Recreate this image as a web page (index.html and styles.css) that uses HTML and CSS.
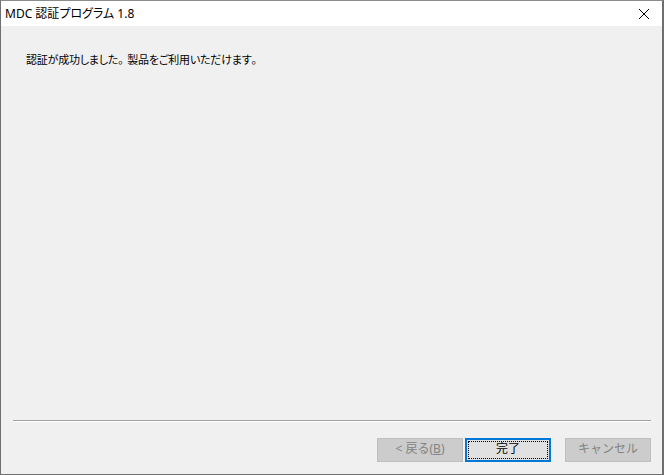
FILE: index.html
```html
<!DOCTYPE html>
<html lang="ja">
<head>
<meta charset="utf-8">
<title>MDC 認証プログラム 1.8</title>
<link rel="stylesheet" href="styles.css">
</head>
<body>
<div class="window">
  <div class="titlebar">
    <span class="title">MDC 認証プログラム 1.8</span>
    <span class="close">
      <svg width="10" height="10" viewBox="0 0 10 10"><path d="M0 0L10 10M10 0L0 10" stroke="#000" stroke-width="1" fill="none"/></svg>
    </span>
  </div>
  <div class="content">
    <p class="message">認証が成功しました<span class="full">。</span>製品をご利用いただけます<span class="full">。</span></p>
    <div class="spacer"></div>
    <div class="separator"></div>
    <div class="buttons">
      <button class="btn disabled"><span class="label">&lt; 戻る(<u>B</u>)</span></button>
      <button class="btn primary"><span class="focus"><span class="label">完了</span></span></button>
      <button class="btn disabled cancel"><span class="label">キャンセル</span></button>
    </div>
  </div>
</div>
</body>
</html>
```
FILE: styles.css
```css
html, body {
  margin: 0;
  padding: 0;
  background: #ffffff;
}
body {
  font-family: "Noto Sans", "Noto Sans CJK JP", sans-serif;
  font-size: 12px;
}
.window {
  box-sizing: border-box;
  width: 664px;
  height: 475px;
  border-top: 1px solid #8c8c8c;
  border-left: 1px solid #6f6f6f;
  border-right: 2px solid #6f6f6f;
  border-bottom: 1px solid #6f6f6f;
  display: flex;
  flex-direction: column;
  background: #f0f0f0;
}
.titlebar {
  height: 25px;
  background: #ffffff;
  display: flex;
  align-items: center;
  justify-content: space-between;
  flex-shrink: 0;
}
.title {
  padding-left: 4px;
  font-size: 12px;
  color: #000;
  font-feature-settings: "palt";
  line-height: 16px;
}
.close {
  width: 34px;
  display: flex;
  justify-content: center;
  align-items: center;
  margin-right: 1px;
}
.close svg { display: block; }
.content {
  flex: 1;
  display: flex;
  flex-direction: column;
  padding: 0 11px 12px 12px;
}
.message {
  margin: 25px 0 0 13px;
  font-family: "Noto Sans CJK JP", sans-serif;
  font-size: 11px;
  line-height: 16px;
  color: #000;
  font-feature-settings: "palt";
  letter-spacing: -0.2px;
}
.message .full {
  font-feature-settings: normal;
  letter-spacing: -2px;
}
.spacer { flex: 1; }
.separator {
  height: 1px;
  background: #a0a0a0;
  border-bottom: 1px solid #ffffff;
}
.buttons {
  display: flex;
  justify-content: flex-end;
  margin-top: 16px;
}
.btn {
  box-sizing: border-box;
  width: 86px;
  height: 24px;
  margin: 0;
  padding: 0;
  font-family: "Noto Sans", "Noto Sans CJK JP", sans-serif;
  font-size: 12px;
  display: flex;
  align-items: center;
  justify-content: center;
}
.label {
  display: block;
  line-height: 14px;
  margin-top: -2px;
}
.btn.disabled {
  background: #cccccc;
  border: 1px solid #bfbfbf;
  color: #838383;
}
.btn.disabled u { text-decoration-color: #838383; }
.btn.primary {
  margin-left: 2px;
  background: #e1e1e1;
  border: 2px solid #0078d7;
  color: #000;
  padding: 1px;
}
.focus {
  box-sizing: border-box;
  width: 100%;
  height: 100%;
  border: 1px dotted #000;
  display: flex;
  align-items: center;
  justify-content: center;
}
.btn.cancel { margin-left: 14px; }
```
